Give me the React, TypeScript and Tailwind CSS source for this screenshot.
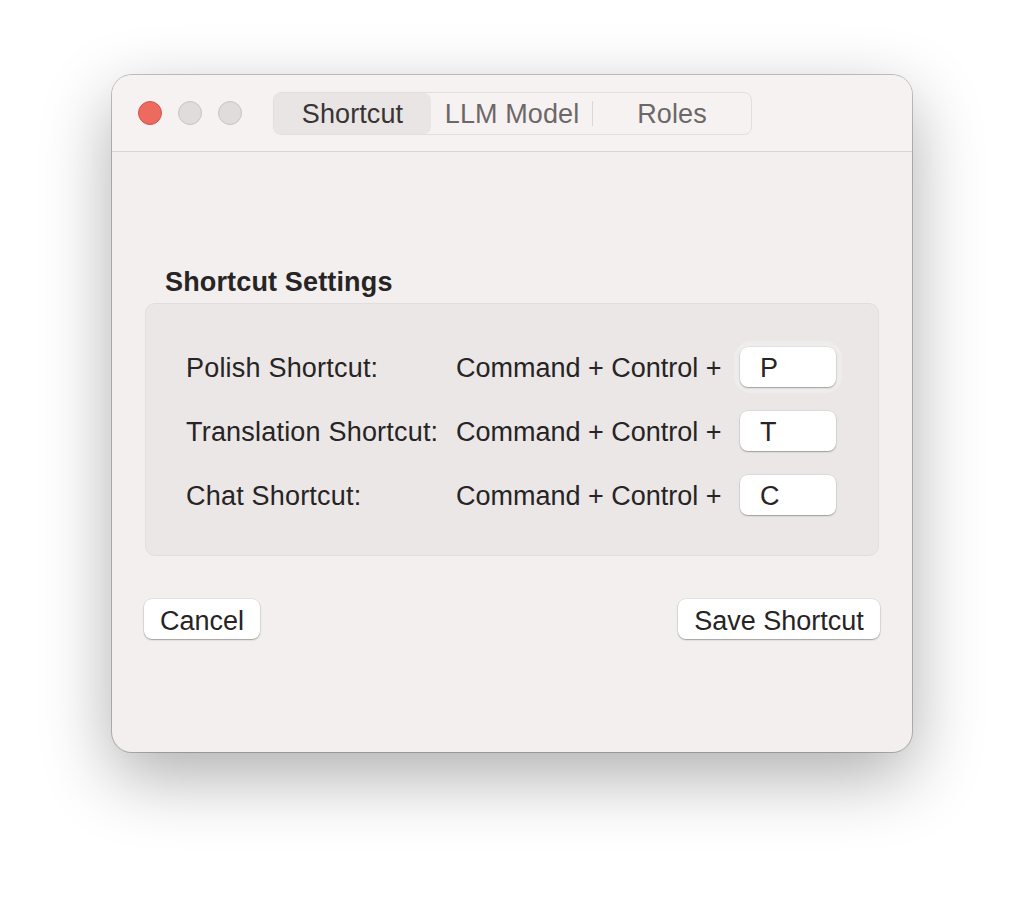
import { useState } from 'react';

const rows = [
  { label: 'Polish Shortcut:', key: 'P', focused: true },
  { label: 'Translation Shortcut:', key: 'T', focused: false },
  { label: 'Chat Shortcut:', key: 'C', focused: false },
];

const tabs = [
  { name: 'Shortcut', width: 'w-[157px]' },
  { name: 'LLM Model', width: 'w-[162px]' },
  { name: 'Roles', width: 'w-[158px]' },
];

function App() {
  const [active, setActive] = useState('Shortcut');

  return (
    <div className="min-h-[900px] bg-white pl-[112px] pt-[75px] font-['Liberation_Sans',Arial,sans-serif] text-[#262424]">
      <div className="w-[800px] h-[677px] rounded-[20px] bg-[#f2efee] overflow-hidden flex flex-col shadow-[0_24px_70px_rgba(0,0,0,0.32),0_0_0_1px_rgba(0,0,0,0.22)]">
        {/* Title bar */}
        <div className="h-[77px] shrink-0 bg-[#f7f2f2] border-b border-[#d9d4d3] flex items-center pl-[26px]">
          <div className="flex gap-[16px]">
            <span className="w-[24px] h-[24px] rounded-full bg-[#ec6a5e] border border-[#d4544a]" />
            <span className="w-[24px] h-[24px] rounded-full bg-[#e0dcdc] border border-[#c9c4c4]" />
            <span className="w-[24px] h-[24px] rounded-full bg-[#e0dcdc] border border-[#c9c4c4]" />
          </div>
          <div className="ml-[31px] h-[43px] flex items-stretch rounded-[8px] border border-[#e3dede] bg-[#f6f2f2]">
            {tabs.map((t, i) => (
              <button
                key={t.name}
                onClick={() => setActive(t.name)}
                className={`${t.width} relative flex items-center justify-center pt-[2px] text-[27px] tracking-[0.1px] rounded-[7px] ${
                  active === t.name ? 'bg-[#e9e5e4] text-[#383434]' : 'text-[#6d6868]'
                }`}
              >
                {t.name}
                {i === 1 && active === 'Shortcut' && (
                  <span className="absolute right-0 top-[8px] bottom-[8px] w-px bg-[#dcd7d7]" />
                )}
              </button>
            ))}
          </div>
        </div>

        {/* Body */}
        <div className="flex-1 px-[33px]">
          <h2 className="mt-[115px] pl-[20px] text-[27px] tracking-[0.15px] leading-[30px] font-bold text-[#262424]">
            Shortcut Settings
          </h2>
          <div className="mt-[6px] h-[253px] rounded-[10px] bg-[#ebe7e6] border border-[#e1dddc] pt-[31px] pl-[40px]">
            {rows.map((r) => (
              <div key={r.label} className="h-[64px] flex items-center text-[27px]">
                <span className="w-[270px] pt-[3px] tracking-[0.2px]">{r.label}</span>
                <span className="w-[284px] pt-[3px]">Command + Control +</span>
                <div className={`rounded-[11px] ${r.focused ? 'shadow-[0_0_0_6px_#efecec]' : ''}`}>
                  <div className="w-[96px] h-[40px] rounded-[8px] bg-white flex items-center pl-[20px] pt-[3px] shadow-[0_1px_1.5px_rgba(0,0,0,0.3),0_0_0_0.5px_rgba(0,0,0,0.08)]">
                    {r.key}
                  </div>
                </div>
              </div>
            ))}
          </div>
          <div className="mt-[43px] -ml-px flex justify-between text-[27px]">
            <button className="w-[116px] h-[40px] pt-[2px] rounded-[8px] bg-white shadow-[0_1px_1.5px_rgba(0,0,0,0.3),0_0_0_0.5px_rgba(0,0,0,0.1)]">
              Cancel
            </button>
            <button className="w-[202px] h-[40px] pt-[2px] mr-[-1px] rounded-[8px] bg-white shadow-[0_1px_1.5px_rgba(0,0,0,0.3),0_0_0_0.5px_rgba(0,0,0,0.1)]">
              Save Shortcut
            </button>
          </div>
        </div>
      </div>
    </div>
  );
}

export default App;
